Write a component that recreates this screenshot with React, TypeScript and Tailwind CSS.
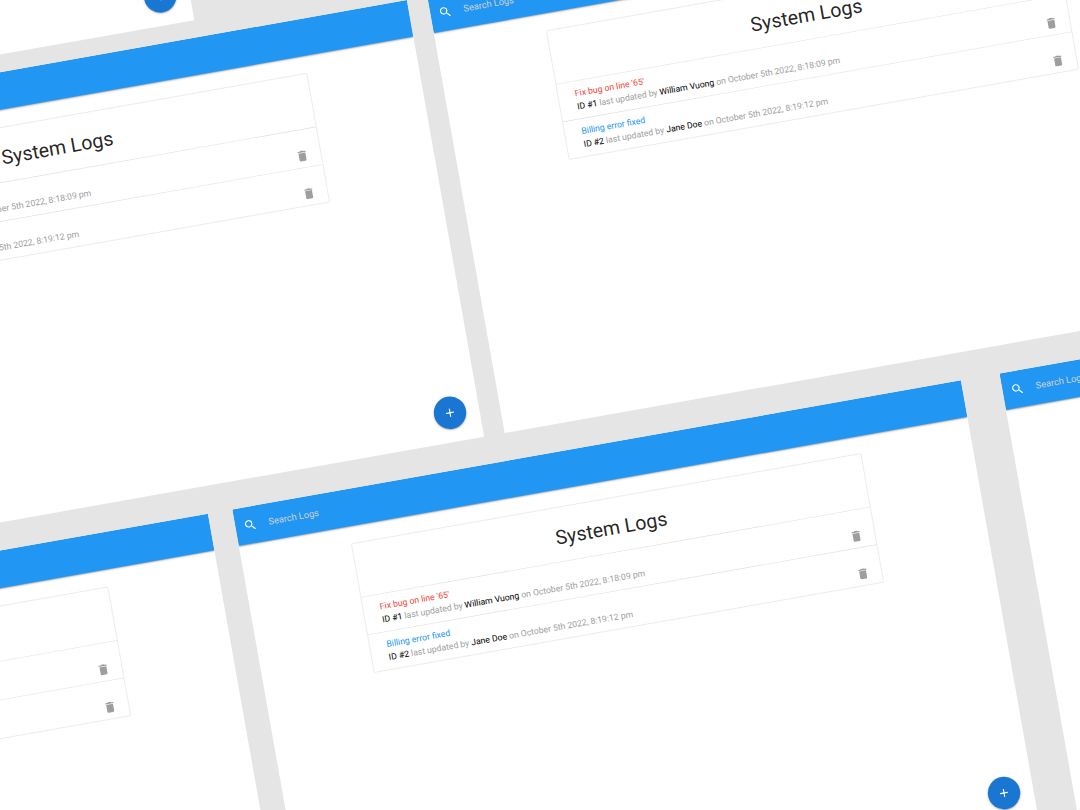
type Log = {
  id: number;
  message: string;
  tech: string;
  date: string;
  attention: boolean;
};

const logs: Log[] = [
  {
    id: 1,
    message: "Fix bug on line '65'",
    tech: 'William Vuong',
    date: 'October 5th 2022, 8:18:09 pm',
    attention: true,
  },
  {
    id: 2,
    message: 'Billing error fixed',
    tech: 'Jane Doe',
    date: 'October 5th 2022, 8:19:12 pm',
    attention: false,
  },
];

function Icon({ d }: { d: string }) {
  return (
    <svg viewBox="0 0 24 24" className="size-6 fill-current" aria-hidden="true">
      <path d={d} />
    </svg>
  );
}

const SEARCH =
  'M15.5 14h-.79l-.28-.27C15.41 12.59 16 11.11 16 9.5 16 5.91 13.09 3 9.5 3S3 5.91 3 9.5 5.91 16 9.5 16c1.61 0 3.09-.59 4.23-1.57l.27.28v.79l5 4.99L20.49 19l-4.99-5zm-6 0C7.01 14 5 11.99 5 9.5S7.01 5 9.5 5 14 7.01 14 9.5 11.99 14 9.5 14z';
const TRASH = 'M6 19c0 1.1.9 2 2 2h8c1.1 0 2-.9 2-2V7H6v12zM19 4h-3.5l-1-1h-5l-1 1H5v2h14V4z';
const PLUS = 'M19 13h-6v6h-2v-6H5v-2h6V5h2v6h6v2z';

function SearchBar() {
  return (
    <header className="bg-[#2196f3] shadow-[0_2px_2px_rgba(0,0,0,0.14),0_3px_1px_-2px_rgba(0,0,0,0.12),0_1px_5px_rgba(0,0,0,0.2)]">
      <label className="flex h-16 items-center gap-5 px-3.5 text-white">
        <Icon d={SEARCH} />
        <input
          type="search"
          aria-label="Search Logs"
          placeholder="Search Logs"
          className="min-w-0 flex-1 bg-transparent text-base outline-none placeholder:text-[#d1d1d1]"
        />
      </label>
    </header>
  );
}

function LogItem({ log }: { log: Log }) {
  return (
    <li className="flex items-end justify-between border-t border-[#e0e0e0] pr-5 pl-[29px]">
      <div className="py-2.5 leading-normal whitespace-nowrap">
        <a href="#log" className={log.attention ? 'block text-[#f44336]' : 'block text-[#2196f3]'}>
          {log.message}
        </a>
        <p className="text-[#9e9e9e]">
          <span className="text-black">ID #{log.id}</span> last updated by{' '}
          <span className="text-black">{log.tech}</span> on {log.date}
        </p>
      </div>
      <button type="button" aria-label={`Delete log ${log.id}`} className="pb-2 text-[#9e9e9e]">
        <Icon d={TRASH} />
      </button>
    </li>
  );
}

function Screen() {
  return (
    <section className="relative h-[767px] w-[1280px] shrink-0 overflow-hidden bg-white">
      <SearchBar />
      <main className="mx-auto mt-[30px] w-7/10 rounded-xs border border-[#e0e0e0] text-[15px]">
        <h1 className="pt-[33px] pb-[23px] text-center text-[34px] leading-[37px] text-black/87">
          System Logs
        </h1>
        <ul>
          {logs.map((log) => (
            <LogItem key={log.id} log={log} />
          ))}
        </ul>
      </main>
      <button
        type="button"
        aria-label="Add log"
        className="absolute right-[23px] bottom-[23px] flex size-14 items-center justify-center rounded-full bg-[#1976d2] text-white shadow-[0_2px_2px_rgba(0,0,0,0.14),0_3px_1px_-2px_rgba(0,0,0,0.12),0_1px_5px_rgba(0,0,0,0.2)]"
      >
        <Icon d={PLUS} />
      </button>
    </section>
  );
}

export default function App() {
  return (
    <div className="relative h-screen overflow-hidden bg-[#e5e5e5] font-['Roboto',sans-serif]">
      {/* Tilted board of full-size screens, shown zoomed out */}
      <div className="absolute top-0 left-0 origin-top-left scale-[0.578] -rotate-[10.05deg]">
        <div className="-mt-[674px] -ml-[1081px] flex w-max flex-col">
          <div className="flex pl-[126px]">
            <Screen />
          </div>
          <div className="mt-[30px] flex gap-9 pl-[494px]">
            <Screen />
            <Screen />
          </div>
          <div className="mt-12 flex gap-[68px]">
            <div className="flex gap-[43px]">
              <Screen />
              <Screen />
            </div>
            <Screen />
          </div>
        </div>
      </div>
    </div>
  );
}
